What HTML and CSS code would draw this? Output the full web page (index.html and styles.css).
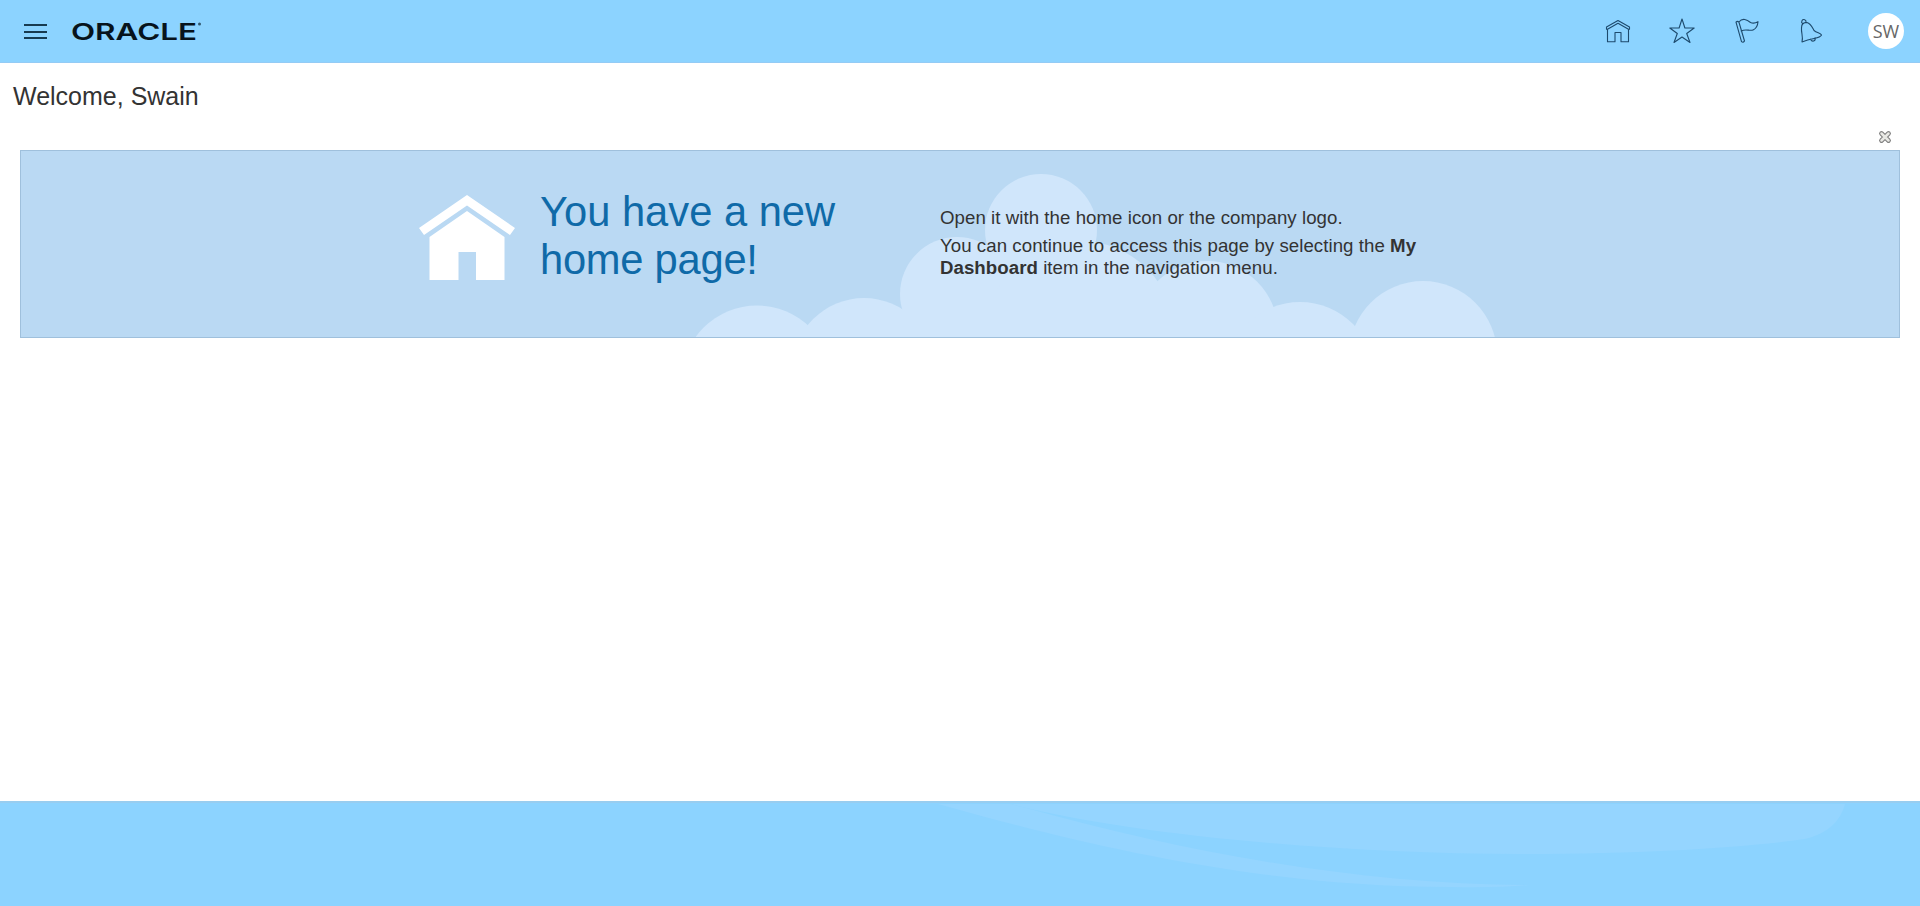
FILE: index.html
```html
<!DOCTYPE html>
<html lang="en">
<head>
<meta charset="utf-8">
<title>Home</title>
<link rel="stylesheet" href="styles.css">
</head>
<body>
<header class="topbar">
  <div class="menu-button"><span></span><span></span><span></span></div>
  <svg class="logo" width="134" height="36" viewBox="0 -6 134 36"><text class="logo-text" x="0" y="20.500" textLength="126" lengthAdjust="spacingAndGlyphs">ORACLE</text><circle class="logo-mark" cx="128.500" cy="5" r="1.500"/></svg>
  <nav class="actions">
    <svg class="icon" width="26" height="26" viewBox="0 0 26 26"><path d="M1.500 9 13 2.500l11.500 6.500v2.200h-1L13 5.300 2.500 11.200h-1zM2.500 11.500v12.200h7.500V14.500h6v9.200h7.500V11.500"/></svg>
    <svg class="icon" width="26" height="26" viewBox="0 0 26 26"><path d="M13 1 15.900 10h9.300l-7.500 5.500 3.300 9L13 19l-8 5.500 3.300-9L.8 10h9.300z"/></svg>
    <svg class="icon" width="26" height="26" viewBox="0 0 26 26"><path d="M2 4.200q1.300-1.500 2.900-.2l5.600 19q-1.200 2-3 .6zM4.900 4C8.500-.5 13 1.500 16.500 4.500q3.500 1.500 7.500-.8-.5 6-4.500 8c-4 2-7-1.500-12.300 1.300"/></svg>
    <svg class="icon" width="26" height="26" viewBox="0 0 26 26"><path d="M4 23.900c1.500-5-1-9-.5-13.900C3.500 6 5 4.500 9 4.500c4 1 5.500 5.500 7 8 3 2.500 6.500 2.500 7.500 4.500-1.500 3.500-6.500 2.500-19.500 6.900zM4.500 5.500A2.200 2.200 0 1 1 8 4.300M12.500 21.300c1.500 3 5.500 2.200 4.500-1.600"/></svg>
  </nav>
  <div class="avatar">SW</div>
</header>
<main class="content">
  <h1 class="welcome">Welcome, Swain</h1>
  <div class="dismiss"><svg width="14" height="14" viewBox="0 0 14 14"><path class="cross-edge" d="M3.500 3.500l7 7m0-7l-7 7"/><path class="cross-fill" d="M3.500 3.500l7 7m0-7l-7 7"/></svg></div>
  <section class="banner">
    <svg class="clouds" width="800" height="187" viewBox="696 151 800 187">
      <circle cx="757" cy="381" r="75.500"/><circle cx="864" cy="370" r="72"/><circle cx="957" cy="294" r="57"/><circle cx="1041" cy="230" r="56"/><circle cx="1080" cy="336" r="95"/><circle cx="1207" cy="332" r="71"/><circle cx="1300" cy="377" r="75"/><circle cx="1423" cy="355" r="74"/><path d="M930 290h230v50H930z"/>
    </svg>
    <svg class="house" width="98" height="86" viewBox="0 0 98 86"><path d="M49 0 97 33l-5 7L49 10.500 6 40l-5-7zM49 16l37.500 26v43H58V57H40.500v28h-29V42z"/></svg>
    <h2 class="headline">You have a new<br><span class="headline-end">home page!</span></h2>
    <div class="message"><p>Open it with the home icon or the company logo.</p><p>You can continue to access this page by selecting the <b>My</b><br><b>Dashboard</b> item in the navigation menu.</p></div>
  </section>
</main>
<footer class="footer">
  <svg width="1920" height="105" viewBox="0 0 1920 105"><path d="M1010 3C1120 32 1330 53 1520 53 1650 53 1750 46 1805 38Q1838 30 1845 3z"/><path d="M938 3C1070 40 1250 86 1450 86Q1500 87 1530 84C1360 84 1180 50 1030 8L1010 3z"/></svg>
</footer>
</body>
</html>
```
FILE: styles.css
```css
* { box-sizing: border-box; }
body { margin: 0; height: 906px; display: flex; flex-direction: column; overflow: hidden; background: #fff; color: #333; font-family: "Liberation Sans", Arial, sans-serif; }
.topbar { height: 63px; background: #8cd3ff; border-bottom: 1px solid #94cbf5; display: flex; align-items: center; padding: 0 16px 0 24px; }
.menu-button { width: 23px; height: 15px; display: flex; flex-direction: column; justify-content: space-between; margin-top: 1px; }
.menu-button span { height: 2px; background: #173a50; }
.logo { margin: 0 0 0 24px; }
.logo-text { font: 600 23.500px Inter, sans-serif; fill: #07131c; }
.logo-mark { fill: #31586f; }
.actions { margin-left: auto; display: flex; gap: 38.500px; }
.icon { fill: none; stroke: #1d4a6d; stroke-width: 1.100; stroke-linejoin: round; stroke-linecap: round; }
.avatar { width: 36px; height: 36px; margin-left: 44px; border-radius: 50%; background: #fff; color: #666; font: 18px/36px "Open Sans", sans-serif; text-align: center; }
.content { flex: 1; display: flex; flex-direction: column; }
.welcome { margin: 19px 0 0 13px; font-size: 25px; line-height: 28px; font-weight: 400; }
.dismiss { display: flex; justify-content: flex-end; height: 14px; margin: 20px 28px 6px 0; }
.cross-edge { stroke: #808080; stroke-width: 4.800; stroke-linecap: round; }
.cross-fill { stroke: #e8e8e4; stroke-width: 2.500; stroke-linecap: round; }
.banner { position: relative; height: 188px; margin: 0 20px; display: flex; background: #bad9f3; border: 1px solid #9fc0dc; overflow: hidden; }
.clouds { position: absolute; left: 675px; top: 0; fill: #d0e6fb; }
.house { margin: 44px 0 0 396.500px; fill: #fff; }
.headline { position: relative; margin: 37px 0 0 24.500px; width: 400px; color: #0f6aa8; font-size: 41.700px; line-height: 48px; font-weight: 400; }
.headline-end { letter-spacing: -0.250px; }
.message { position: relative; font-size: 18.670px; letter-spacing: 0.050px; line-height: 22px; margin-top: 56px; white-space: nowrap; }
.message p { margin: 0 0 6px; }
.footer { height: 105px; background: #8cd3ff; border-top: 2px solid #98cdf0; overflow: hidden; }
.footer svg { display: block; margin-top: -2px; fill: #95d5ff; }
```
